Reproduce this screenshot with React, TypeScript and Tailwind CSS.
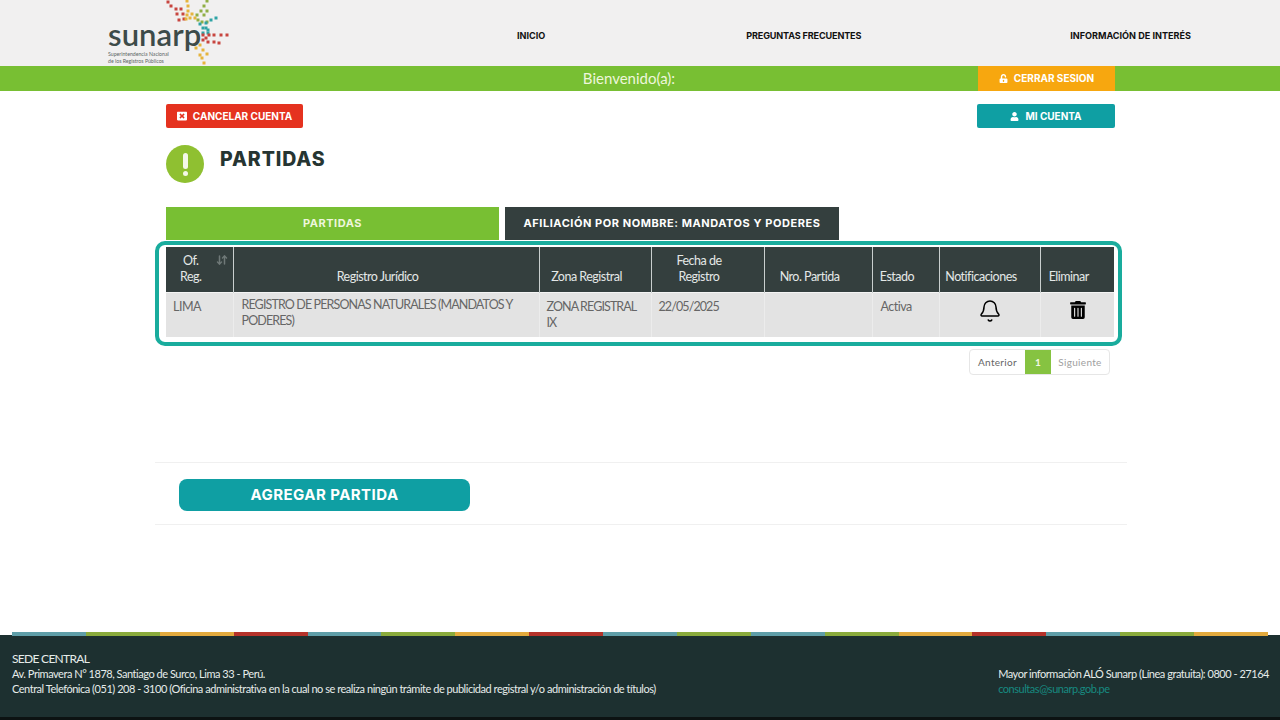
import { ArrowDownUp, Bell } from 'lucide-react'
import { FaTrashAlt, FaUnlockAlt, FaUser, FaWindowClose } from 'react-icons/fa'

const dotGroups = [
  { color: '#c8453f', dots: [[168, 2], [171, 6], [176, 9], [181, 9], [177, 14], [183, 14], [179, 20], [184, 19]] },
  { color: '#e6b43c', dots: [[187, 1], [188, 6], [188, 11], [187, 15], [192, 14], [186, 19], [190, 18], [195, 18]] },
  { color: '#8fae45', dots: [[207, 1], [204, 6], [201, 11], [207, 11], [197, 15], [204, 15], [198, 20], [202, 22], [207, 22]] },
  { color: '#2fa3a5', dots: [[216, 18], [211, 20], [206, 23], [200, 24], [203, 28], [206, 28], [208, 30], [203, 33], [208, 33]] },
  { color: '#c8453f', dots: [[227, 35], [221, 35], [214, 35], [209, 35], [203, 35], [219, 43], [214, 42], [208, 42], [203, 40], [206, 38]] },
  { color: '#e6b43c', dots: [[204, 63], [202, 58], [207, 54], [200, 55], [203, 50], [196, 48], [200, 45]] },
]

const stripe = [
  '#5f9ea8', '#8aab3c', '#e3aa3d', '#b5322a', '#5f9ea8', '#8aab3c', '#e3aa3d', '#b5322a', '#5f9ea8',
  '#8aab3c', '#5f9ea8', '#8aab3c', '#e3aa3d', '#b5322a', '#5f9ea8', '#8aab3c', '#e3aa3d',
]

const Logo = () => (
  <div className="relative h-[66px] w-[122px] ml-[108px]">
    <div className="pt-[17px] text-[31px] leading-[34px] font-semibold tracking-[0.1px] text-[#3d4b49]">sunarp</div>
    <div className="text-[5.2px] leading-[7px] text-[#5c6665]">Superintendencia Nacional</div>
    <div className="text-[5.2px] leading-[7px] text-[#5c6665]">de los Registros Públicos</div>
    <svg viewBox="165 0 65 66" className="absolute left-[57px] top-0 w-[65px] h-[66px]">
      {dotGroups.map((group) =>
        group.dots.map(([x, y]) => (
          <rect key={`${x}-${y}`} x={x - 1.5} y={y - 1.5} width="3" height="3" fill={group.color} />
        )),
      )}
    </svg>
  </div>
)

const thClass = 'border-l border-[#c9cfce] first:border-l-0 pl-[4px] pr-[21px] pb-[7px] align-bottom text-center text-[12.5px] leading-[16px] tracking-[-0.5px] font-normal text-[#e4e8e7]'
const tdClass = 'border-l border-[#ececec] first:border-l-0 align-top text-[12.5px] leading-[16px] text-[#666666]'

const App = () => {
  return (
    <div className="h-[720px] flex flex-col bg-white font-[Lato,sans-serif] overflow-hidden">
      <header className="h-[66px] shrink-0 flex items-center bg-[#f1f0f0]">
        <Logo />
        <nav className="ml-[287px] w-[674px] pt-[6px] flex justify-between text-[9.1px] font-bold font-[Inter,sans-serif] text-[#111111]">
          <span>INICIO</span>
          <span className="mr-[8px] tracking-[-0.15px]">PREGUNTAS FRECUENTES</span>
          <span>INFORMACIÓN DE INTERÉS</span>
        </nav>
      </header>

      <div className="h-[25px] shrink-0 flex bg-[#78bf33] pl-[280px] pr-[165px]">
        <div className="flex-1 text-center text-[15px] leading-[25px] text-[#eef6dc]">Bienvenido(a):</div>
        <div className="w-[137px] flex items-center justify-center gap-[6px] bg-[#f7a70f] text-white text-[10px] font-bold font-[Inter,sans-serif]">
          <FaUnlockAlt size={9} />
          CERRAR SESION
        </div>
      </div>

      <main className="flex-1 flex flex-col">
        <div className="ml-[166px] w-[948px] pt-[13px]">
          <div className="flex justify-between">
            <button className="w-[137px] h-[24px] flex items-center justify-center gap-[6px] rounded-[2px] bg-[#e5321f] text-white text-[10px] font-bold font-[Inter,sans-serif]">
              <FaWindowClose size={10} />
              CANCELAR CUENTA
            </button>
            <button className="w-[138px] h-[24px] -mr-px flex items-center justify-center gap-[6px] rounded-[2px] bg-[#0f9fa3] text-white text-[10px] font-bold font-[Inter,sans-serif]">
              <FaUser size={9} />
              MI CUENTA
            </button>
          </div>

          <div className="mt-[17px] flex items-start gap-[16px]">
            <div className="w-[38px] h-[38px] rounded-full bg-[#8fc031] flex flex-col items-center justify-center gap-[2px]">
              <div className="w-[5px] h-[16px] rounded-full bg-[#f4f8e8]" />
              <div className="w-[5px] h-[5px] rounded-full bg-[#f4f8e8]" />
            </div>
            <h1 className="mt-[2px] text-[19.5px] leading-[24px] tracking-[0.9px] font-extrabold font-[Inter,sans-serif] text-[#263532]">PARTIDAS</h1>
          </div>

          <div className="mt-[24px] flex gap-[6px] h-[33px] text-[11px] tracking-[0.55px] font-bold font-[Inter,sans-serif] text-white">
            <div className="w-[333px] flex items-center justify-center bg-[#78bf33] text-[#eef6dc]">PARTIDAS</div>
            <div className="w-[334px] flex items-center justify-center bg-[#343f3e]">AFILIACIÓN POR NOMBRE: MANDATOS Y PODERES</div>
          </div>

          <div className="mt-[1px] -ml-[11px] -mr-[8px] border-[4px] border-[#19ac9d] rounded-[10px] pt-[2px] pb-[5px] pl-[7px] pr-[4px]">
            <table className="w-[948px] table-fixed border-collapse">
              <colgroup>
                <col className="w-[67px]" />
                <col className="w-[306px]" />
                <col className="w-[112px]" />
                <col className="w-[113px]" />
                <col className="w-[108px]" />
                <col className="w-[67px]" />
                <col className="w-[101px]" />
                <col className="w-[74px]" />
              </colgroup>
              <thead>
                <tr className="h-[45px] bg-[#343f3e] border-b border-[#f4f4f4]">
                  <th className={`${thClass} relative`}>
                    Of.
                    <br />
                    Reg.
                    <ArrowDownUp size={12} strokeWidth={3} className="absolute right-[5px] top-[7px] text-[#6f7978]" />
                  </th>
                  <th className={thClass}>Registro Jurídico</th>
                  <th className={thClass}>Zona Registral</th>
                  <th className={thClass}>
                    Fecha de
                    <br />
                    Registro
                  </th>
                  <th className={thClass}>Nro. Partida</th>
                  <th className={thClass}>Estado</th>
                  <th className={thClass}>Notificaciones</th>
                  <th className={thClass}>Eliminar</th>
                </tr>
              </thead>
              <tbody>
                <tr className="h-[45px] bg-[#e3e3e3]">
                  <td className={`${tdClass} pl-[7px] pt-[6px] tracking-[-0.5px]`}>LIMA</td>
                  <td className={`${tdClass} pl-[8px] pr-[20px] pt-[4px] tracking-[-0.87px]`}>REGISTRO DE PERSONAS NATURALES (MANDATOS Y PODERES)</td>
                  <td className={`${tdClass} pl-[7px] pr-[8px] pt-[6px] tracking-[-0.9px]`}>ZONA REGISTRAL IX</td>
                  <td className={`${tdClass} pl-[7px] pt-[6px] tracking-[-0.9px]`}>22/05/2025</td>
                  <td className={tdClass} />
                  <td className={`${tdClass} pl-[8px] pt-[6px] tracking-[-0.5px]`}>Activa</td>
                  <td className={`${tdClass} pt-[6px]`}>
                    <Bell size={24} strokeWidth={1.5} className="mx-auto text-black" />
                  </td>
                  <td className={`${tdClass} pt-[8px]`}>
                    <FaTrashAlt size={18} className="ml-[28px] text-black" />
                  </td>
                </tr>
              </tbody>
            </table>
          </div>

          <div className="mt-[3px] flex justify-end pr-[4px]">
            <div className="h-[26px] flex items-stretch border border-[#e6e6e6] rounded-[4px] text-[10px] tracking-[0.3px] overflow-hidden">
              <span className="w-[55px] flex items-center justify-center text-[#666666]">Anterior</span>
              <span className="w-[26px] flex items-center justify-center bg-[#86c341] text-[#f4f8e8] font-bold">1</span>
              <span className="w-[58px] flex items-center justify-center text-[#a0a0a0]">Siguiente</span>
            </div>
          </div>
        </div>

        <div className="mt-[87px] ml-[155px] w-[972px] border-t border-[#f0f0f0] pt-[16px] pb-[13px] pl-[24px] border-b">
          <button className="w-[291px] h-[32px] rounded-[8px] bg-[#0f9fa3] text-white text-[15px] tracking-[0.45px] font-bold font-[Inter,sans-serif]">
            AGREGAR PARTIDA
          </button>
        </div>
      </main>

      <footer className="relative h-[85px] shrink-0 bg-[#1d3030] border-b-[3px] border-[#0c1212] pl-[12px] pr-[11px] pt-[16px] flex justify-between text-[11px] leading-[15px] tracking-[-0.47px] text-[#e6ecea]">
        <div className="absolute left-[12px] right-[12px] -top-[3px] h-[4px] flex">
          {stripe.map((color, idx) => (
            <div key={idx} className="flex-1" style={{ backgroundColor: color }} />
          ))}
        </div>
        <div>
          <div className="text-[12px] tracking-[-0.7px]">SEDE CENTRAL</div>
          <div>Av. Primavera N° 1878, Santiago de Surco, Lima 33 - Perú.</div>
          <div>Central Telefónica (051) 208 - 3100 (Oficina administrativa en la cual no se realiza ningún trámite de publicidad registral y/o administración de títulos)</div>
        </div>
        <div className="pt-[15px]">
          <div>Mayor información ALÓ Sunarp (Línea gratuita): 0800 - 27164</div>
          <div className="text-[#178a80]">consultas@sunarp.gob.pe</div>
        </div>
      </footer>
    </div>
  )
}

export default App
